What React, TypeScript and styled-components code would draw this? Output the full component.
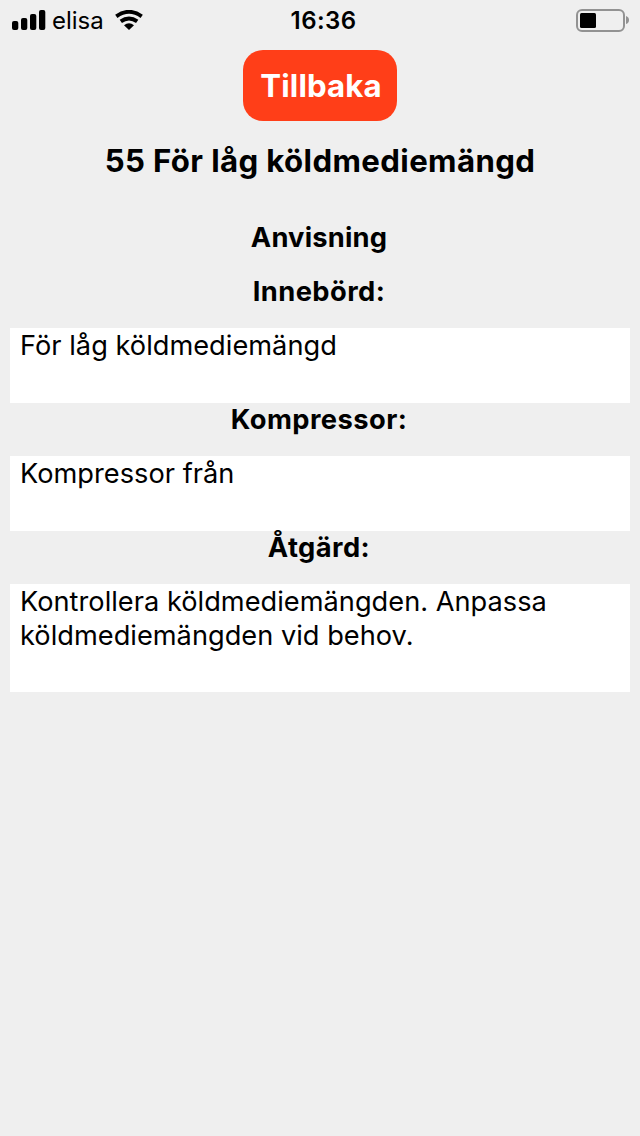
import React from "react";
import styled, { createGlobalStyle } from "styled-components";

const Global = createGlobalStyle`
  html, body { margin: 0; background: #efefef; }
  * { box-sizing: border-box; }
`;

const Screen = styled.main`
  min-height: 1136px;
  background: #efefef;
  color: #000;
  font-family: Inter, "Liberation Sans", sans-serif;
  display: flex;
  flex-direction: column;
`;

const StatusBar = styled.header`
  height: 40px;
  display: grid;
  grid-template-columns: 1fr auto 1fr;
  align-items: center;
  padding: 0 11px 0 12px;
`;

const Network = styled.div`
  display: flex;
  align-items: center;
`;

const Carrier = styled.span`
  font-size: 24px;
  line-height: 38px;
  padding-top: 2px;
  margin: 0 11px 0 6px;
`;

const Clock = styled.time`
  font-size: 24px;
  font-weight: 600;
  line-height: 38px;
  padding: 2px 0 0 6px;
  letter-spacing: 0.4px;
`;

const Battery = styled.svg`
  justify-self: end;
`;

const BackButton = styled.button`
  align-self: center;
  width: 154px;
  height: 71px;
  margin-top: 10px;
  padding: 0 0 0 2px;
  border: 0;
  border-radius: 20px;
  background: #ff3e18;
  color: #fff;
  font: 700 31.2px/70px Inter, "Liberation Sans", sans-serif;
  letter-spacing: 0.12px;
`;

const Title = styled.h1`
  margin: 20px 0 0;
  font-size: 31.2px;
  font-weight: 700;
  line-height: 40px;
  letter-spacing: 0.38px;
  text-align: center;
`;

const Heading = styled.h2<{ $height: number; $tracking?: number }>`
  margin: 0;
  height: ${(p) => p.$height}px;
  font-size: 27.3px;
  font-weight: 700;
  line-height: 34px;
  letter-spacing: ${(p) => p.$tracking ?? 0.45}px;
  padding-right: 2px;
  text-align: center;
`;

const Instructions = styled.section`
  padding: 40px 10px 0;
`;

const Description = styled.p<{ $height: number }>`
  margin: 0;
  height: ${(p) => p.$height}px;
  padding: 1px 10px 0;
  background: #fff;
  font-size: 27.2px;
  line-height: 34px;
  letter-spacing: 0.02px;
`;

export default function App() {
  return (
    <Screen>
      <Global />
      <StatusBar>
        <Network>
          <svg width="34" height="20" viewBox="0 0 34 20">
            <rect x="0" y="11" width="6.3" height="9" rx="2" />
            <rect x="9" y="8" width="6.3" height="12" rx="2" />
            <rect x="18" y="4" width="6.3" height="16" rx="2" />
            <rect x="27" y="0" width="6.3" height="20" rx="2" />
          </svg>
          <Carrier>elisa</Carrier>
          <svg width="28" height="20" viewBox="0 0 28 20">
            <path d="M1.3 6.4Q14-2.8 26.7 6.4M5.8 11.4Q14 5.4 22.2 11.4" fill="none" stroke="#000" strokeWidth="3.9" />
            <path d="M9 15.2Q14 11.2 19 15.2L14 20Z" />
          </svg>
        </Network>
        <Clock>16:36</Clock>
        <Battery width="53" height="24" viewBox="0 0 53 24">
          <rect x="1" y="2" width="47" height="21" rx="5" fill="none" stroke="#929292" strokeWidth="2" />
          <rect x="4" y="5" width="16" height="15" rx="1.5" />
          <path d="M50 8Q53 9 53 12T50 16Z" fill="#929292" />
        </Battery>
      </StatusBar>
      <BackButton>Tillbaka</BackButton>
      <Title>55 För låg köldmediemängd</Title>
      <Instructions>
        <Heading $height={54} $tracking={0.2}>Anvisning</Heading>
        <Heading $height={53}>Innebörd:</Heading>
        <Description $height={75}>För låg köldmediemängd</Description>
        <Heading $height={53}>Kompressor:</Heading>
        <Description $height={75}>Kompressor från</Description>
        <Heading $height={53}>Åtgärd:</Heading>
        <Description $height={108}>Kontrollera köldmediemängden. Anpassa köldmediemängden vid behov.</Description>
      </Instructions>
    </Screen>
  );
}
